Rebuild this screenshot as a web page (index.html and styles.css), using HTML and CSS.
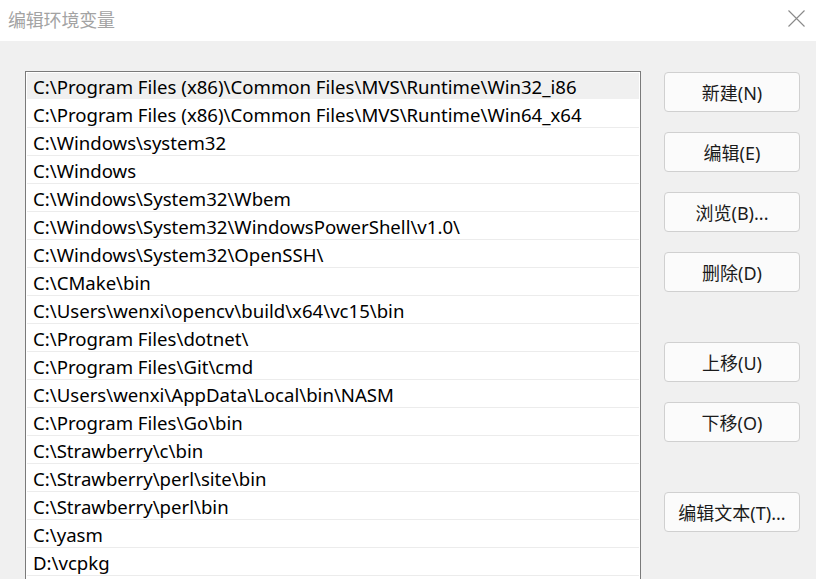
FILE: index.html
```html
<!DOCTYPE html>
<html lang="zh-CN">
<head>
<meta charset="utf-8">
<title>编辑环境变量</title>
<link rel="stylesheet" href="styles.css">
</head>
<body>
<div class="window">
  <header class="titlebar">
    <span class="title">编辑环境变量</span>
    <span class="close" aria-label="关闭">
      <svg width="17" height="17" viewBox="0 0 17 17"><path d="M0.5 0.5 L16.5 16.5 M16.5 0.5 L0.5 16.5" stroke="#8a8a8a" stroke-width="1.1" fill="none"/></svg>
    </span>
  </header>
  <main class="body">
    <div class="listbox">
      <div class="row selected">C:\Program Files (x86)\Common Files\MVS\Runtime\Win32_i86</div>
      <div class="row">C:\Program Files (x86)\Common Files\MVS\Runtime\Win64_x64</div>
      <div class="row">C:\Windows\system32</div>
      <div class="row">C:\Windows</div>
      <div class="row">C:\Windows\System32\Wbem</div>
      <div class="row">C:\Windows\System32\WindowsPowerShell\v1.0\</div>
      <div class="row">C:\Windows\System32\OpenSSH\</div>
      <div class="row">C:\CMake\bin</div>
      <div class="row">C:\Users\wenxi\opencv\build\x64\vc15\bin</div>
      <div class="row">C:\Program Files\dotnet\</div>
      <div class="row">C:\Program Files\Git\cmd</div>
      <div class="row">C:\Users\wenxi\AppData\Local\bin\NASM</div>
      <div class="row">C:\Program Files\Go\bin</div>
      <div class="row">C:\Strawberry\c\bin</div>
      <div class="row">C:\Strawberry\perl\site\bin</div>
      <div class="row">C:\Strawberry\perl\bin</div>
      <div class="row">C:\yasm</div>
      <div class="row">D:\vcpkg</div>
    </div>
    <div class="buttons">
      <button class="btn">新建(N)</button>
      <button class="btn">编辑(E)</button>
      <button class="btn">浏览(B)...</button>
      <button class="btn">删除(D)</button>
      <button class="btn gap-before">上移(U)</button>
      <button class="btn">下移(O)</button>
      <button class="btn gap-before">编辑文本(T)...</button>
    </div>
  </main>
</div>
</body>
</html>
```
FILE: styles.css
```css
html, body {
  margin: 0;
  padding: 0;
  width: 816px;
  height: 579px;
  overflow: hidden;
}
body {
  font-family: "Noto Sans", "Noto Sans CJK SC", sans-serif;
  color: #000;
  background: #f0f0f0;
}
.window {
  display: flex;
  flex-direction: column;
  height: 579px;
  overflow: hidden;
}
.titlebar {
  height: 41px;
  background: #ffffff;
  display: flex;
  align-items: center;
  justify-content: space-between;
  padding: 0 11px 0 8px;
  box-sizing: border-box;
  flex: none;
}
.title {
  font-family: "Noto Sans CJK SC", sans-serif;
  font-size: 18px;
  color: #a3a3a3;
  margin-top: -4px;
  letter-spacing: -0.2px;
}
.close {
  display: flex;
  width: 17px;
  height: 17px;
  margin-top: -5px;
}
.body {
  flex: 1;
  display: flex;
  align-items: flex-start;
  padding: 30px 0 0 25px;
  background: #f0f0f0;
  overflow: hidden;
}
.listbox {
  width: 616px;
  flex: none;
  border: 1px solid #7a7a7a;
  background: #ffffff;
  padding: 0 1px 0 1px;
  height: 600px;
  box-sizing: border-box;
}
.row {
  height: 28px;
  box-sizing: border-box;
  border-bottom: 1px solid #ececec;
  padding: 2px 0 0 6px;
  font-size: 18.6px;
  line-height: 26px;
  white-space: nowrap;
  color: #000;
}
.row.selected {
  background: #f0f0f0;
  border-bottom-color: #ffffff;
  border-top: 1px solid #ffffff;
  padding-top: 1px;
  line-height: 26px;
}
.buttons {
  display: flex;
  flex-direction: column;
  gap: 20px;
  margin-left: 23px;
  padding-top: 1px;
}
.btn {
  width: 136px;
  height: 40px;
  background: #fbfbfb;
  border: 1px solid #d0d0d0;
  border-radius: 4px;
  font-family: "Noto Sans", "Noto Sans CJK SC", sans-serif;
  font-size: 18px;
  color: #1b1b1b;
  padding: 0;
}
.btn.gap-before {
  margin-top: 30px;
}
```
